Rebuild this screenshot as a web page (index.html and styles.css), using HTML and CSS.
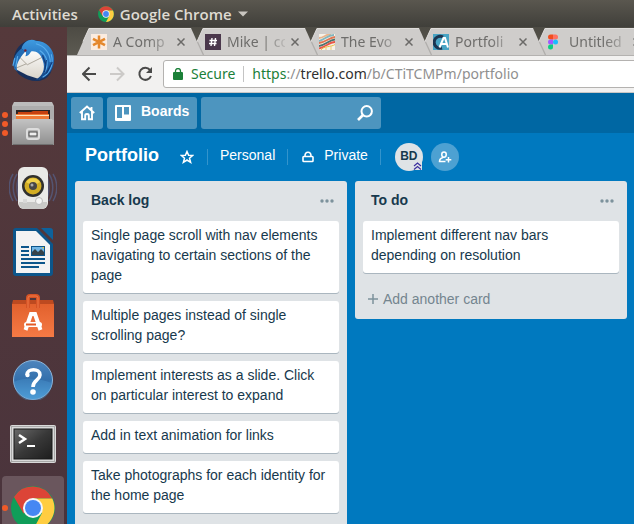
FILE: index.html
```html
<!DOCTYPE html>
<html lang="en">
<head>
<meta charset="utf-8">
<title>Portfolio | Trello</title>
<link rel="stylesheet" href="styles.css">
</head>
<body>
<svg width="0" height="0" class="defs" aria-hidden="true">
  <defs>
    <symbol id="chrome" viewBox="0 0 44 44">
      <circle cx="22" cy="22" r="22" fill="#109d59"/>
      <path d="M3 11A22 22 0 0 1 41.300 12.500H22L12.500 27.500Z" fill="#dc4437"/>
      <path d="M22 12.500H41.300A22 22 0 0 1 22 44L31 27Z" fill="#ffcd41"/>
      <circle cx="22" cy="22" r="10" fill="#f4f6fa"/>
      <circle cx="22" cy="22" r="8" fill="#4587f3"/>
    </symbol>
    <symbol id="tab-shape" viewBox="0 0 126 27">
      <path d="M0 27 12 0H114L126 27Z" fill="#cfcdcb"/>
      <path d="M6 13.500 12 .5H114" fill="none" stroke="#dedcda"/>
    </symbol>
    <symbol id="tab-seam" viewBox="0 0 126 27"><path d="M6.500 14 12.500 27" fill="none" stroke="#b0aeac" stroke-width="1.300"/></symbol>
    <symbol id="close" viewBox="0 0 8 8"><path d="M.5 .5 7.500 7.500M7.500 .5 .5 7.500" stroke="#6b6a68" stroke-width="1.500"/></symbol>
    <symbol id="dots" viewBox="0 0 14 4"><g fill="#7d929c"><circle cx="2" cy="2" r="1.700"/><circle cx="7" cy="2" r="1.700"/><circle cx="12" cy="2" r="1.700"/></g></symbol>
    <linearGradient id="birdBlue" x2="0" y2="1"><stop stop-color="#3f9be0"/><stop offset=".5" stop-color="#2470bd"/><stop offset="1" stop-color="#123f7c"/></linearGradient>
    <linearGradient id="paper" x2="0" y2="1"><stop stop-color="#fff"/><stop offset="1" stop-color="#d9d4ca"/></linearGradient>
    <linearGradient id="metal" x2="0" y2="1"><stop stop-color="#c3c3c3"/><stop offset="1" stop-color="#8f8f8f"/></linearGradient>
    <linearGradient id="bag" x2="0" y2="1"><stop stop-color="#e2612d"/><stop offset="1" stop-color="#f57a45"/></linearGradient>
    <linearGradient id="helpBlue" x2="0" y2="1"><stop stop-color="#4d85bd"/><stop offset=".5" stop-color="#3470ac"/><stop offset="1" stop-color="#4f9fd8"/></linearGradient>
    <linearGradient id="screen" x2="1" y2="1"><stop stop-color="#696969"/><stop offset=".5" stop-color="#383838"/><stop offset="1" stop-color="#1d1d1d"/></linearGradient>
  </defs>
</svg>

<header class="topbar">
  <button class="topbar-item">Activities</button>
  <button class="topbar-item app-menu">
    <svg width="16" height="16"><use href="#chrome"/></svg>
    Google Chrome
    <svg width="10" height="6" viewBox="0 0 10 6"><path d="M0 .5H10L5 5.500Z" fill="#c9c6c0"/></svg>
  </button>
</header>

<div class="desktop">
  <nav class="dock" aria-label="Applications">
    <button class="dock-item" aria-label="Thunderbird">
      <svg width="46" height="46" viewBox="0 0 48 48">
        <path d="M6 15C2 22 3 35 12 41 22 48 36 48 42 38 48 28 46 12 35 6 30 3 24 3 20 3 13 5 8 10 6 15Z" fill="#17305c"/>
        <path d="M5 33 8 19 19 11 36 15 37 36 31 44 18 40Z" fill="url(#paper)"/>
        <path d="M8 19 18 29 36 20M5 33 17 28" fill="none" stroke="#aaa59b"/>
        <path d="M12 12C14 4 22 1 27 4 38 4 46 13 46 23 46 36 37 45 26 45 33 42 38 34 34 24 32 17 27 14 22 15 20 19 18 20 16 20 17 18 17 16 16 15Z" fill="url(#birdBlue)"/>
        <path d="M12 12C5 17 1 26 5 34L8 36C5 30 9 23 16 15Z" fill="#226bb3"/>
        <path d="M27 7C36 9 42 17 42 26M31 14C39 19 41 29 36 37M43 18C46 28 42 38 34 42M5 22 3 30M8 20 6 31" fill="none" stroke="#58acec" stroke-width="1.200"/>
        <path d="M38 24 36 37M44 26 38 38M34 19 37 28" fill="none" stroke="#133a78" stroke-width="1.200"/>
        <circle cx="16" cy="14" r="1.300" fill="#731d2c"/>
      </svg>
    </button>
    <button class="dock-item" aria-label="Files">
      <span class="running"><i></i><i></i><i></i></span>
      <svg width="42" height="44" viewBox="0 0 42 44">
        <path d="M2 0H40L42 4V43H0V4Z" fill="#bcbcbc"/><path d="M0 4H42V18H0Z" fill="#adadad"/>
        <path d="M4 8H38V18H4Z" fill="#2d2422"/><path d="M6 10H19L21 9H36V18H5Z" fill="#c7410f"/>
        <path d="M4 12H37V18H4Z" fill="#f17b36"/><path d="M4 13.500H37" stroke="#ffe3bd"/>
        <path d="M2 17H40L42 21V43H0V21Z" fill="url(#metal)"/><path d="M1 42.500H41" stroke="#707070"/>
        <rect x="15" y="27" width="12" height="10" rx="2" fill="#b4b4b4" stroke="#ddd" stroke-width="2"/>
        <rect x="17" y="30" width="8" height="4" fill="#eee" stroke="#4b4b4b"/>
      </svg>
    </button>
    <button class="dock-item" aria-label="Rhythmbox">
      <svg width="48" height="44" viewBox="0 0 48 44">
        <g fill="none" stroke="#56648f" stroke-width="1.500" opacity=".65"><path d="M4 8C-1 16-1 27 4 35M8 8C3 16 3 27 8 35M11 8C7 16 7 27 11 35M44 8C49 16 49 27 44 35M40 8C45 16 45 27 40 35M37 8C41 16 41 27 37 35"/></g>
        <rect x="9" y="1" width="30" height="42" rx="6" fill="#e9e9e7"/><path d="M10 36H38V38Q37 43 33 43H15Q11 43 10 38Z" fill="#c9c9c7"/>
        <circle cx="24" cy="20" r="11" fill="#30302e"/><circle cx="24" cy="20" r="8.500" fill="#d3ad23"/><path d="M17 16A8.500 8.500 0 0 1 31 16L24 20Z" fill="#f0d14b"/><circle cx="24" cy="20" r="4" fill="#464646"/><circle cx="23" cy="19" r="1.500" fill="#aaa"/>
        <circle cx="30" cy="35" r="3.500" fill="#f4f4f3" stroke="#bbb"/><rect x="14" y="33" width="4" height="4" fill="#d8d8d7"/>
      </svg>
    </button>
    <button class="dock-item" aria-label="LibreOffice Writer">
      <svg width="40" height="48" viewBox="0 0 40 48">
        <path d="M3 0H24L40 16V45Q40 48 37 48H3Q0 48 0 45V3Q0 0 3 0Z" fill="#0c568b"/>
        <path d="M28 0H37Q40 0 40 3V12Z" fill="#0d629c"/><path d="M3 3H23L37 17V45H3Z" fill="#f3f3f3"/>
        <path d="M8 19H16M8 23H16M8 27H16M8 31H32M8 35H32M8 39H26" stroke="#0c568b" stroke-width="2"/>
        <rect x="18" y="18" width="14" height="10" fill="#72b7e6"/><path d="M18 28V25L22 21 25 24 28 21 32 25V28Z" fill="#36434a"/><path d="M28 18H32V22Z" fill="#f4c832"/><rect x="18.500" y="18.500" width="13" height="9" fill="none" stroke="#0c568b"/>
      </svg>
    </button>
    <button class="dock-item" aria-label="Ubuntu Software">
      <svg width="42" height="44" viewBox="0 0 42 44">
        <path d="M1 6H41L42 10V43H0V10Z" fill="#bd4a20"/><path d="M0 10H42V43H0Z" fill="url(#bag)"/>
        <path d="M16 14V4Q16 2 18 2H24Q26 2 26 4V14" fill="none" stroke="#d65325" stroke-width="4"/><path d="M16 14V4Q16 2 18 2H24Q26 2 26 4V14" fill="none" stroke="#ef7b49"/>
        <path d="M13.500 36 19 20H23L28.500 36" fill="none" stroke="#fff" stroke-width="4"/><rect x="12" y="28" width="18" height="5" rx="2.500" fill="#fff"/><path d="M14 30.500H24" stroke="#e35b26" stroke-width="2"/>
      </svg>
    </button>
    <button class="dock-item" aria-label="Help">
      <svg width="40" height="40" viewBox="0 0 40 40">
        <circle cx="20" cy="20" r="19.500" fill="url(#helpBlue)" stroke="#8eb7dc"/><path d="M1 22C10 17 26 18 39 23A19 19 0 0 1 1 22Z" fill="#4c9ad4" opacity=".35"/>
        <path d="M14 15C14 8 27 8 27 15 27 20 20 20 20 27" fill="none" stroke="#fff" stroke-width="3.600"/><circle cx="14.500" cy="15" r="2.200" fill="#fff"/><circle cx="20" cy="32" r="2.800" fill="#fff"/>
      </svg>
    </button>
    <button class="dock-item" aria-label="Terminal">
      <svg width="46" height="38" viewBox="0 0 46 38">
        <rect width="46" height="38" rx="2" fill="#d9d9d9"/><rect x="1.500" y="1.500" width="43" height="35" fill="none" stroke="#a9a9a9"/>
        <rect x="4" y="4" width="38" height="30" fill="url(#screen)" stroke="#191919"/><path d="M9 10 15 14 9 18" fill="none" stroke="#fff" stroke-width="2.500"/><path d="M17 21H25" stroke="#fff" stroke-width="2"/>
      </svg>
    </button>
    <button class="dock-item active" aria-label="Google Chrome">
      <span class="running"><i></i></span>
      <svg width="44" height="44"><use href="#chrome"/></svg>
    </button>
  </nav>

  <div class="browser">
    <div class="tabs">
      <div class="tab">
        <svg class="tab-bg"><use href="#tab-shape"/></svg>
        <svg width="16" height="16" viewBox="0 0 16 16"><path d="M0 0H16V16H0Z" fill="#fbece0"/><path d="M8 1.500V14.500M2 4.800 14 11.200M14 4.800 2 11.200" stroke="#e5882c" stroke-width="2.500"/></svg>
        <span class="tab-title">A Comp</span>
        <button class="tab-close" aria-label="Close tab"><svg width="8" height="8"><use href="#close"/></svg></button>
      </div>
      <div class="tab">
        <svg class="tab-bg"><use href="#tab-shape"/><use href="#tab-seam"/></svg>
        <svg width="16" height="16" viewBox="0 0 16 16"><path d="M0 0H16V16H0Z" fill="#4b384c"/><path d="M7 4 6 12M10.500 4 9.500 12M4.500 6.500H12M4 9.500H11.500" stroke="#fff" stroke-width="1.400"/></svg>
        <span class="tab-title">Mike | co</span>
        <button class="tab-close" aria-label="Close tab"><svg width="8" height="8"><use href="#close"/></svg></button>
      </div>
      <div class="tab">
        <svg class="tab-bg"><use href="#tab-shape"/><use href="#tab-seam"/></svg>
        <svg width="16" height="16" viewBox="0 0 16 16"><path d="M0 0H16V16H0Z" fill="#f6f2e8"/><g fill="none" stroke-width="1.800"><path d="M0 4C5 4 7 0 12 0" stroke="#e9b48c"/><path d="M0 7C6 6 8 1 15 1" stroke="#81b6bf"/><path d="M0 9C8 8 9 4 16 3" stroke="#e27653"/><path d="M0 12C7 11 10 6 16 5.500" stroke="#4b746f"/><path d="M0 14.500C7 13 10 8 16 8" stroke="#e95648"/><path d="M2 16C4 12 13 13 16 10.500" stroke="#e7bd45" stroke-width="1"/><path d="M7 16V12M12 16V12" stroke="#eacb78" stroke-width="1"/></g></svg>
        <span class="tab-title">The Evo</span>
        <button class="tab-close" aria-label="Close tab"><svg width="8" height="8"><use href="#close"/></svg></button>
      </div>
      <div class="tab">
        <svg class="tab-bg"><use href="#tab-shape"/><use href="#tab-seam"/></svg>
        <svg width="16" height="16" viewBox="0 0 16 16"><path d="M0 0H16V16H0Z" fill="#48a4c4"/><path d="M10 3A6 6 0 1 0 9 14" fill="none" stroke="#1c3551" stroke-width="3"/><path d="M6.500 13.500 10.500 4H12L15 13.500M8.500 10H14" fill="none" stroke="#fff" stroke-width="2"/></svg>
        <span class="tab-title">Portfoli</span>
        <button class="tab-close" aria-label="Close tab"><svg width="8" height="8"><use href="#close"/></svg></button>
      </div>
      <div class="tab">
        <svg class="tab-bg"><use href="#tab-shape"/><use href="#tab-seam"/></svg>
        <svg width="16" height="16" viewBox="0 0 16 16"><path d="M6 .5H3.500A2.500 2.500 0 0 0 3.500 5.500H6Z" fill="#f24e1e"/><path d="M6 .5H8.500A2.500 2.500 0 0 1 8.500 5.500H6Z" fill="#ff7262"/><path d="M6 5.500H3.500A2.500 2.500 0 0 0 3.500 10.500H6Z" fill="#a259ff"/><circle cx="8.500" cy="8" r="2.500" fill="#1abcfe"/><path d="M6 10.500H3.500A2.500 2.500 0 1 0 6 13Z" fill="#0acf83"/></svg>
        <span class="tab-title">Untitled</span>
        <button class="tab-close" aria-label="Close tab"><svg width="8" height="8"><use href="#close"/></svg></button>
      </div>
    </div>

    <div class="toolbar">
      <button aria-label="Back"><svg width="16" height="16" viewBox="0 0 16 16"><path d="M14 8H1.500M7.500 1.500 1 8 7.500 14.500" fill="none" stroke="#4a4a49" stroke-width="2"/></svg></button>
      <button aria-label="Forward"><svg width="16" height="16" viewBox="0 0 16 16"><path d="M1 8H13.500M8 1.500 14.500 8 8 14.500" fill="none" stroke="#cccac8" stroke-width="2"/></svg></button>
      <button aria-label="Reload"><svg width="16" height="16" viewBox="0 0 16 16"><path d="M14 4A6 6 0 1 0 15 10" fill="none" stroke="#4a4a49" stroke-width="2"/><path d="M16 1V7H10Z" fill="#4a4a49"/></svg></button>
      <div class="address">
        <svg width="10" height="12" viewBox="0 0 10 12"><path d="M1 4H9Q10 4 10 5V11Q10 12 9 12H1Q0 12 0 11V5Q0 4 1 4Z" fill="#1b8038"/><path d="M2.500 5V3A2.500 2.500 0 0 1 7.500 3V5" fill="none" stroke="#1b8038" stroke-width="1.300"/></svg>
        <span class="secure">Secure</span>
        <span class="url" role="textbox" aria-label="Address"><span class="scheme">https</span>://<span class="host">trello.com</span>/b/CTiTCMPm/portfolio</span>
      </div>
    </div>

    <main class="page">
      <header class="site-header">
        <a class="header-btn" href="#" aria-label="Home"><svg width="16" height="16" viewBox="0 0 16 16"><path d="M.8 8 8 1.500 15.200 8M3 6.500V14.200H6.200V10.500Q6.200 9 8 9 9.800 9 9.800 10.500V14.200H13V6.500M12.500 2V5" fill="none" stroke="#fff" stroke-width="1.900"/></svg></a>
        <button class="header-btn boards-btn"><svg width="16" height="16" viewBox="0 0 16 16"><path fill-rule="evenodd" d="M1 0H15Q16 0 16 1V15Q16 16 15 16H1Q0 16 0 15V1Q0 0 1 0ZM2 2V13H7V2ZM9 2V9.500H14V2Z" fill="#fff"/></svg><span>Boards</span></button>
        <label class="search">
          <input type="search" aria-label="Search">
          <svg width="16" height="16" viewBox="0 0 16 16"><circle cx="9.700" cy="6.300" r="5.200" fill="none" stroke="#fff" stroke-width="2"/><path d="M6 10 1 15" stroke="#fff" stroke-width="2.600"/></svg>
        </label>
      </header>

      <div class="board-header">
        <h1>Portfolio</h1>
        <button class="star" aria-label="Star board"><svg width="14" height="14" viewBox="0 0 14 14"><path d="M7 1.500 8.600 5.200 12.600 5.500 9.500 8.200 10.600 12.300 7 10 3.400 12.300 4.500 8.200 1.400 5.500 5.400 5.200Z" fill="none" stroke="#fff" stroke-width="1.500"/></svg></button>
        <button class="board-btn"><span>Personal</span></button>
        <button class="board-btn"><svg width="12" height="12" viewBox="0 0 12 12"><path d="M1.800 5.500H10.200Q11 5.500 11 6.300V9.700Q11 10.500 10.200 10.500H1.800Q1 10.500 1 9.700V6.300Q1 5.500 1.800 5.500ZM3 5C3 0 9 0 9 5" fill="none" stroke="#fff" stroke-width="1.600"/></svg><span>Private</span></button>
        <div class="members">
          <button class="avatar">BD<svg class="admin" width="9" height="8" viewBox="0 0 9 8"><path d="M0 0H9V8H0Z" fill="#dfe3e6"/><path d="M1 4 4.500 1 8 4M1 7.500 4.500 4.500 8 7.500" fill="none" stroke="#3c2fa0" stroke-width="1.200"/></svg></button>
          <button class="avatar add" aria-label="Add member"><svg width="14" height="14" viewBox="0 0 14 14"><path d="M6 7.300C3 7 3 2 6 2 9 2 9 7 6 7.300ZM5 7.500Q1.500 8.500 1.500 11.500H7.500M10.500 7V12.500M7.700 9.700H13.300" fill="none" stroke="#fff" stroke-width="1.500"/></svg></button>
        </div>
      </div>

      <div class="lists">
        <section class="list fill">
          <header><h2>Back log</h2><button aria-label="List actions"><svg width="14" height="4"><use href="#dots"/></svg></button></header>
          <a class="card" href="#">Single page scroll with nav elements navigating to certain sections of the page</a>
          <a class="card" href="#">Multiple pages instead of single scrolling page?</a>
          <a class="card" href="#">Implement interests as a slide. Click on particular interest to expand</a>
          <a class="card" href="#">Add in text animation for links</a>
          <a class="card" href="#">Take photographs for each identity for the home page</a>
        </section>
        <section class="list">
          <header><h2>To do</h2><button aria-label="List actions"><svg width="14" height="4"><use href="#dots"/></svg></button></header>
          <a class="card" href="#">Implement different nav bars depending on resolution</a>
          <button class="add-card"><svg width="10" height="10" viewBox="0 0 10 10"><path d="M5 0V10M0 5H10" stroke="#7d929c" stroke-width="1.500"/></svg>Add another card</button>
        </section>
      </div>
    </main>
  </div>
</div>
</body>
</html>
```
FILE: styles.css
```css
* { box-sizing: border-box; }

body {
  margin: 0;
  height: 100vh;
  display: flex;
  flex-direction: column;
  overflow: hidden;
  font: 14px/20px "Liberation Sans", Arial, sans-serif;
}

button, input {
  margin: 0;
  padding: 0;
  border: 0;
  background: none;
  color: inherit;
  font: inherit;
}

a { color: inherit; text-decoration: none; }
h1, h2 { margin: 0; }
svg { display: block; flex: none; }
.defs { position: absolute; }

/* Desktop shell */
.topbar {
  flex: none;
  height: 27px;
  padding: 0 12px;
  display: flex;
  align-items: center;
  gap: 20px;
  background: linear-gradient(#5a574f, #403f3a);
  color: #dfdbd2;
  font: 600 15px/20px "Open Sans", sans-serif;
}

.topbar-item { display: flex; align-items: center; gap: 6px; }

.desktop { flex: 1; min-height: 0; display: flex; }

.dock {
  flex: none;
  width: 67px;
  padding: 1px 1px 0 0;
  overflow: hidden;
  display: flex;
  flex-direction: column;
  background: linear-gradient(#55393b, #4a343c);
}

.dock-item {
  position: relative;
  flex: none;
  height: 64px;
  display: flex;
  align-items: center;
  justify-content: center;
}

.dock-item.active { margin: 0 2px; border-radius: 4px; background: #6a565d; }

.running {
  position: absolute;
  left: 2px;
  display: grid;
  gap: 3px;
}

.active .running { left: 0; }
.running i { width: 6px; height: 6px; border-radius: 50%; background: #f05a28; }

/* Browser chrome */
.browser { flex: 1; min-width: 0; display: flex; flex-direction: column; }

.tabs {
  flex: none;
  height: 29px;
  padding: 1px 0 0 10px;
  display: flex;
  overflow: hidden;
  background: linear-gradient(#4d4b44, #5c5a52);
  border-bottom: 1px solid #b4b2b0;
  color: #6e6d6b;
  font: 14px/20px "Noto Sans", sans-serif;
}

.tab {
  position: relative;
  flex: none;
  width: 126px;
  margin-right: -12px;
  padding: 0 18px 0 14px;
  display: flex;
  align-items: center;
  gap: 6px;
}

.tab > * { position: relative; }
.tab > .tab-bg { position: absolute; inset: 0; width: 100%; height: 100%; }

.tab-title {
  flex: 1;
  min-width: 0;
  white-space: nowrap;
  -webkit-mask-image: linear-gradient(90deg, #000 60%, #0003);
  mask-image: linear-gradient(90deg, #000 60%, #0003);
}

.toolbar {
  flex: none;
  height: 37px;
  padding: 4px 0 4px 15px;
  display: flex;
  align-items: center;
  gap: 11px;
  background: #f2f1f0;
  border-bottom: 1px solid #c9c7c5;
}

.address {
  flex: 1;
  min-width: 0;
  height: 28px;
  margin-right: -4px;
  padding: 0 9px;
  display: flex;
  align-items: center;
  gap: 8px;
  overflow: hidden;
  white-space: nowrap;
  background: #fff;
  border: 1px solid #b4b2b0;
  border-radius: 3px;
  color: #8f8f8f;
  font: 14px/20px "Noto Sans", sans-serif;
}

.secure, .scheme { color: #1b8038; }
.secure { padding-right: 8px; border-right: 1px solid #c4c4c4; line-height: 16px; }
.host { color: #30302f; }

/* Board page */
.page {
  flex: 1;
  min-height: 0;
  display: flex;
  flex-direction: column;
  background: #0079bf;
  color: #fff;
}

.site-header { flex: none; padding: 4px; display: flex; gap: 4px; background: #0067a3; }

.header-btn, .search {
  height: 32px;
  padding: 0 8px;
  display: flex;
  align-items: center;
  border-radius: 3px;
  background: #4d95bf;
}

.boards-btn { gap: 10px; font-weight: 700; }
.boards-btn span { padding-bottom: 4px; }
.search { width: 180px; }
.search input { flex: 1; min-width: 0; outline: 0; }

.board-header {
  flex: none;
  height: 48px;
  padding: 0 18px;
  display: flex;
  align-items: center;
}

.board-header h1 { padding-bottom: 4px; font-size: 18px; line-height: 20px; }
.star { padding: 0 13px 0 21px; }

.board-btn {
  height: 16px;
  padding: 0 12px;
  display: flex;
  align-items: center;
  gap: 10px;
  border-left: 1px solid #3394cc;
}

.board-btn span { padding-bottom: 4px; }
.board-btn + .board-btn { padding-left: 14px; border-right: 1px solid #3394cc; }
.members { display: flex; gap: 8px; padding-left: 14px; }

.avatar {
  position: relative;
  width: 28px;
  height: 28px;
  padding-bottom: 2px;
  display: grid;
  place-items: center;
  border-radius: 50%;
  background: #dfe3e6;
  color: #17394d;
  font-size: 12px;
  font-weight: 700;
}

.avatar.add { padding: 0; background: #4da1d2; }
.admin { position: absolute; right: 1px; bottom: 1px; }

.lists {
  flex: 1;
  min-height: 0;
  padding: 0 8px;
  display: flex;
  align-items: flex-start;
  gap: 8px;
  color: #17394d;
}

.list {
  flex: none;
  width: 272px;
  padding: 0 8px;
  display: flex;
  flex-direction: column;
  gap: 8px;
  border-radius: 3px;
  background: #dfe3e6;
}

.list.fill { height: 100%; border-radius: 3px 3px 0 0; }

.list header {
  height: 32px;
  padding: 0 5px 0 8px;
  display: flex;
  align-items: center;
  justify-content: space-between;
}

.list h2 { padding-top: 6px; font-size: 14px; line-height: 20px; }
.list header button { padding-top: 8px; }

.card {
  padding: 4px 8px 8px;
  border-radius: 3px;
  background: #fff;
  box-shadow: 0 1px 0 #aab6bf;
}

.add-card {
  height: 38px;
  padding: 0 5px 2px;
  display: flex;
  align-items: center;
  gap: 5px;
  color: #74858f;
}
```
